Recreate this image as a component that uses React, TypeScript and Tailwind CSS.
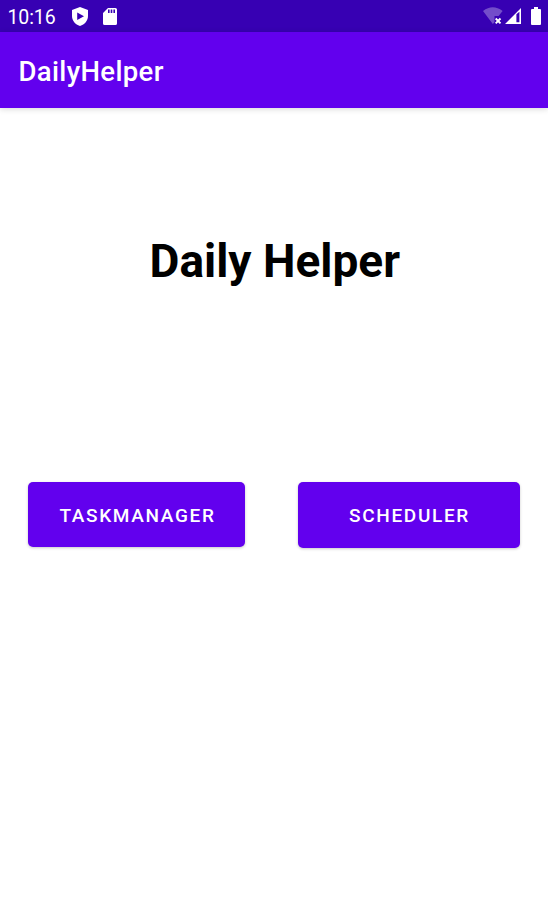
function StatusBar() {
  return (
    <div className="flex h-8 items-start justify-between bg-[#3700b3] text-white">
      <div className="flex items-start">
        <span className="ml-[7.5px] mt-[6px] w-[64.5px] text-[19.5px] leading-6 tracking-[-0.1px]">10:16</span>
        <svg className="mt-[7px] h-[19px] w-[16px]" viewBox="0 0 16 19">
          <path fill="currentColor" fillRule="evenodd" d="M8 0L16 3V9C16 13.6 12.7 17.6 8 19C3.3 17.6 0 13.6 0 9V3ZM5.2 5.6V13L12 9.3Z" />
        </svg>
        <svg className="ml-[15px] mt-2 h-[17px] w-[14px]" viewBox="0 0 14 17">
          <path fill="currentColor" fillRule="evenodd" d="M5 0H12.4Q14 0 14 1.6V15.4Q14 17 12.4 17H1.6Q0 17 0 15.4V5ZM5 1.5V5H6.6V1.5ZM7.7 1.5V5H9.3V1.5ZM10.4 1.5V5H12V1.5Z" />
        </svg>
      </div>
      <div className="flex items-start">
        <svg className="mt-[7px] h-[18px] w-[20px]" viewBox="0 0 20 18">
          <path fill="#fff" fillOpacity=".3" d="M0 4Q9.8-3.5 19.6 4L15.6 9H11.5V15.2L9.8 17Z" />
          <path stroke="#fff" strokeWidth="1.9" d="M12.7 11.5L17.5 16.4M17.5 11.5L12.7 16.4" />
        </svg>
        <svg className="ml-[2px] mt-2 h-4 w-4" viewBox="0 0 16 16">
          <path fill="currentColor" fillRule="evenodd" d="M16 0V16H0ZM11.4 6.2V14.3H14.4V3.8Z" />
        </svg>
        <svg className="ml-[10px] mr-[7px] mt-[7px] h-[18px] w-[10px]" viewBox="0 0 10 18">
          <path fill="currentColor" d="M3 0H7V2H9Q10 2 10 3V17Q10 18 9 18H1Q0 18 0 17V3Q0 2 1 2H3Z" />
        </svg>
      </div>
    </div>
  );
}

export default function App() {
  return (
    <div className="h-[920px] w-[548px] overflow-hidden bg-white font-['Roboto',sans-serif]">
      <StatusBar />
      <header className="flex h-[76px] items-center bg-[#6200ee] pl-[18.5px] pt-1 text-white shadow-[0_1px_6px_rgba(0,0,0,0.16)]">
        <span className="text-[27.5px] font-medium leading-8 tracking-[0.35px]">DailyHelper</span>
      </header>
      <main>
        <h1 className="mt-[126px] pl-[1.5px] text-center text-[46px] font-bold leading-[54px]">Daily Helper</h1>
        <div className="mt-[194px] flex items-start pl-7 text-[19px] font-medium tracking-[1.65px] text-white">
          <button className="h-[65px] w-[217px] rounded-[5px] bg-[#6200ee] pl-[2px] pt-[3px] shadow-[0_1px_3px_rgba(0,0,0,0.22)]">TASKMANAGER</button>
          <button className="ml-[53px] h-[66px] w-[222px] rounded-[5px] bg-[#6200ee] pl-[1px] pt-[2px] shadow-[0_1px_3px_rgba(0,0,0,0.22)]">SCHEDULER</button>
        </div>
      </main>
    </div>
  );
}
